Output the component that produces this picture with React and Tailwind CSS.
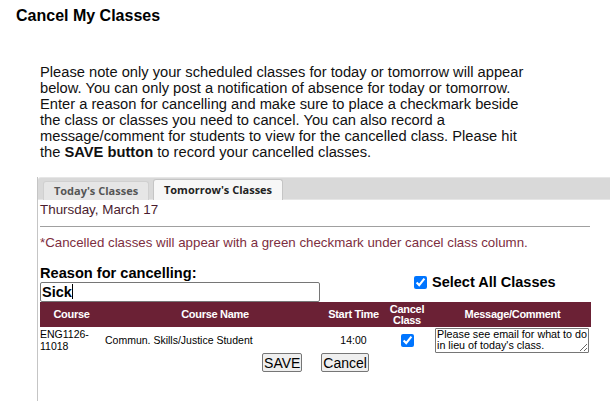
export default function App() {
  return (
    <div className="w-[610px] h-[401px] overflow-hidden bg-white text-black font-['Liberation_Sans',Arial,sans-serif]">
      <h1 className="pl-4 pt-[7px] text-[16px] leading-[18px] font-bold">Cancel My Classes</h1>
      <p className="ml-10 mt-[39px] w-[488px] text-[14.7px] leading-[16px] text-[#111]">
        Please note only your scheduled classes for today or tomorrow will appear below. You can only post a notification of absence for today or tomorrow. Enter a reason for cancelling and make sure to place a checkmark beside the class or classes you need to cancel. You can also record a message/comment for students to view for the cancelled class. Please hit the <b>SAVE button</b> to record your cancelled classes.
      </p>
      <div className="ml-[37px] mt-[17px] h-[300px] border-l border-[#c5c5c5]">
        <div className="h-[23px] bg-[#d9d9d9] border-t border-[#c6c6c6] rounded-tl-[3px] flex items-end pl-[5px] gap-[4px] border-b border-[#e6e6e6] font-['Open_Sans',sans-serif] font-bold text-[11px]">
          <div className="h-[19px] w-[106px] -mb-px bg-[#e6e6e6] border border-b-0 border-[#d0d0d0] rounded-t-[3px] flex items-center justify-center text-[#555]">Today's Classes</div>
          <div className="h-[21px] w-[130px] -mb-px bg-[#f7f7f7] border border-b-0 border-[#c5c5c5] rounded-t-[3px] flex items-center justify-center text-[#222]">Tomorrow's Classes</div>
        </div>
        <div className="pl-[2px]">
          <div className="pt-[2px] text-[13.4px] leading-[15px] text-[#4a1c2e]">Thursday, March 17</div>
          <div className="mt-[9px] w-[550px] h-px bg-[#a0a0a0]" />
          <div className="mt-[8px] text-[13.3px] leading-[15px] text-[#7d2e40]">*Cancelled classes will appear with a green checkmark under cancel class column.</div>
          <div className="mt-[15px] flex items-end">
            <div className="w-[374px]">
              <div className="text-[14.6px] leading-[17px] font-bold">Reason for cancelling:</div>
              <div className="w-[280px] h-[20px] border border-[#767676] rounded-[2px] text-[14.5px] leading-[18px] font-bold pl-[1px]">Sick<span className="inline-block w-px h-[15px] bg-black align-[-2px]" /></div>
            </div>
            <label className="flex items-center gap-[5px] mb-[11px] text-[14.5px] leading-[17px] font-bold">
              <input type="checkbox" defaultChecked className="w-[13px] h-[13px] m-0 accent-[#0075ff]" />
              Select All Classes
            </label>
          </div>
          <table className="w-[551px] table-fixed border-collapse">
            <colgroup>
              <col className="w-[63px]" />
              <col className="w-[224px]" />
              <col className="w-[53px]" />
              <col className="w-[54px]" />
              <col className="w-[157px]" />
            </colgroup>
            <thead>
              <tr className="bg-[#6b2135] text-white text-[11px] leading-[11px] font-bold tracking-[-0.3px] h-[25px]">
                <th className="p-0 font-bold">Course</th>
                <th className="p-0 font-bold">Course Name</th>
                <th className="p-0 font-bold">Start Time</th>
                <th className="p-0 font-bold">Cancel<br />Class</th>
                <th className="p-0 font-bold">Message/Comment</th>
              </tr>
            </thead>
            <tbody>
              <tr className="h-[26px] text-[10.5px] leading-[12px]">
                <td className="p-0 align-middle">ENG1126-<br />11018</td>
                <td className="p-0 pl-[2px] align-middle">Commun. Skills/Justice Student</td>
                <td className="p-0 text-center align-middle">14:00</td>
                <td className="p-0 text-center align-middle">
                  <input type="checkbox" defaultChecked className="w-[13px] h-[13px] m-0 accent-[#0075ff] align-middle" />
                </td>
                <td className="p-0 pl-[1px] align-middle">
                  <textarea
                    readOnly
                    defaultValue={"Please see email for what to do in lieu of today's class."}
                    className="block w-[154px] h-[25px] border border-[#767676] rounded-[1px] px-[1px] py-0 text-[10.75px] leading-[11.5px] text-black resize-y overflow-hidden font-['Liberation_Sans',Arial,sans-serif]"
                  />
                </td>
              </tr>
            </tbody>
          </table>
          <div className="w-[551px] flex justify-center gap-[19px]">
            <button className="h-[19px] px-[1px] border border-[#767676] rounded-[2px] bg-[#efefef] text-[14px] leading-[16px]">SAVE</button>
            <button className="h-[19px] px-[1px] border border-[#767676] rounded-[2px] bg-[#efefef] text-[14px] leading-[16px]">Cancel</button>
          </div>
        </div>
      </div>
    </div>
  );
}
